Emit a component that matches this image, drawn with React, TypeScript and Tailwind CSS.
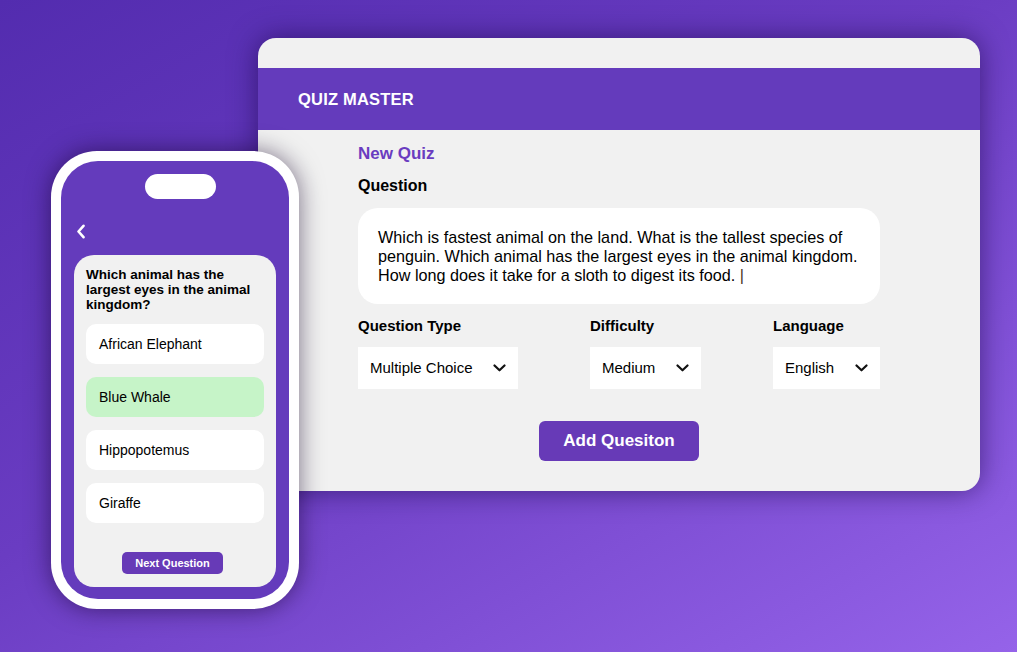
import React from "react";

const Chevron = () => (
  <svg width="13" height="8" viewBox="0 0 13 8" fill="none">
    <path d="M1.5 1.5 L6.5 6.3 L11.5 1.5" stroke="#111" strokeWidth="2.2" strokeLinecap="round" strokeLinejoin="round" />
  </svg>
);

function Select({ label, value, width, colW }: { label: string; value: string; width: string; colW: string }) {
  return (
    <div className={`${colW} flex flex-col`}>
      <div className="text-[15px] leading-[16px] font-bold text-black">{label}</div>
      <div className={`${width} mt-[13px] h-[42px] bg-white flex items-center justify-between pl-[12px] pr-[12px]`}>
        <span className="text-[15px] text-black">{value}</span>
        <Chevron />
      </div>
    </div>
  );
}

export default function App() {
  const options = ["African Elephant", "Blue Whale", "Hippopotemus", "Giraffe"];
  return (
    <div
      className="relative w-[1017px] h-[652px] overflow-hidden pt-[38px] pl-[258px] bg-[linear-gradient(150deg,#532caf_0%,#6a3cc2_45%,#9563e9_100%)]"
      style={{ fontFamily: '"Liberation Sans", Arial, sans-serif' }}
    >
      {/* Desktop card */}
      <div className="w-[722px] h-[453px] rounded-[18px] bg-[#f1f1f1] overflow-hidden shadow-[0_0_28px_rgba(20,0,60,0.55)] flex flex-col">
        <div className="mt-[30px] h-[62px] bg-[#643bbc] flex items-center pl-[40px]">
          <span className="text-white font-bold text-[16.5px] tracking-[0.2px]">QUIZ MASTER</span>
        </div>
        <div className="pl-[100px] w-[622px] flex flex-col">
          <div className="mt-[14px] text-[17px] leading-[20px] font-bold text-[#6a3cc0]">New Quiz</div>
          <div className="mt-[13px] text-[16px] leading-[18px] font-bold text-black">Question</div>
          <div className="mt-[13px] w-[522px] h-[96px] bg-white rounded-[20px] px-[20px] pt-[20px] pb-[18px] text-[16.2px] leading-[19px] text-black">
            Which is fastest animal on the land. What is the tallest species of penguin. Which animal has the largest eyes in the animal kingdom. How long does it take for a sloth to digest its food.{" "}
            <span className="text-[#4a3520]">|</span>
          </div>
          <div className="mt-[14px] flex">
            <Select label="Question Type" value="Multiple Choice" width="w-[160px]" colW="w-[232px]" />
            <Select label="Difficulty" value="Medium" width="w-[111px]" colW="w-[183px]" />
            <Select label="Language" value="English" width="w-[107px]" colW="w-[107px]" />
          </div>
          <div className="mt-[32px] w-[522px] flex justify-center">
            <button className="w-[160px] h-[40px] rounded-[6px] bg-[#673ab7] text-white font-bold text-[17px]">
              Add Quesiton
            </button>
          </div>
        </div>
      </div>

      {/* Phone */}
      <div className="absolute left-[51px] top-[151px] w-[248px] h-[458px] rounded-[46px] bg-white p-[10px] shadow-[0_0_24px_rgba(20,0,40,0.55)]">
        <div className="h-full rounded-[37px] bg-[#643bbc] flex flex-col px-[13px] pb-[12px]">
          <div className="mt-[13px] ml-[71px] w-[71px] h-[25px] rounded-full bg-white" />
          <div className="mt-[25px] ml-[2px] h-[14px] flex items-center">
            <svg width="10" height="15" viewBox="0 0 10 15" fill="none">
              <path d="M7.5 1.8 L2.5 7.5 L7.5 13.2" stroke="white" strokeWidth="2.6" strokeLinecap="round" strokeLinejoin="round" />
            </svg>
          </div>
          <div className="mt-[17px] flex-1 rounded-[20px] bg-[#f1f1f1] px-[12px] pt-[12px] pb-[13px] flex flex-col">
            <div className="text-[13.5px] leading-[15px] font-bold text-black">
              Which animal has the largest eyes in the animal kingdom?
            </div>
            <div className="mt-[12px] flex flex-col gap-[13px]">
              {options.map((o) => (
                <div
                  key={o}
                  className={`h-[40px] rounded-[10px] flex items-center pl-[13px] text-[14px] text-black ${
                    o === "Blue Whale" ? "bg-[#c6f4c8]" : "bg-white"
                  }`}
                >
                  {o}
                </div>
              ))}
            </div>
            <div className="mt-auto flex">
              <button className="ml-[36px] w-[101px] h-[22px] rounded-[5px] bg-[#673ab7] text-white font-bold text-[11px]">
                Next Question
              </button>
            </div>
          </div>
        </div>
      </div>
    </div>
  );
}
